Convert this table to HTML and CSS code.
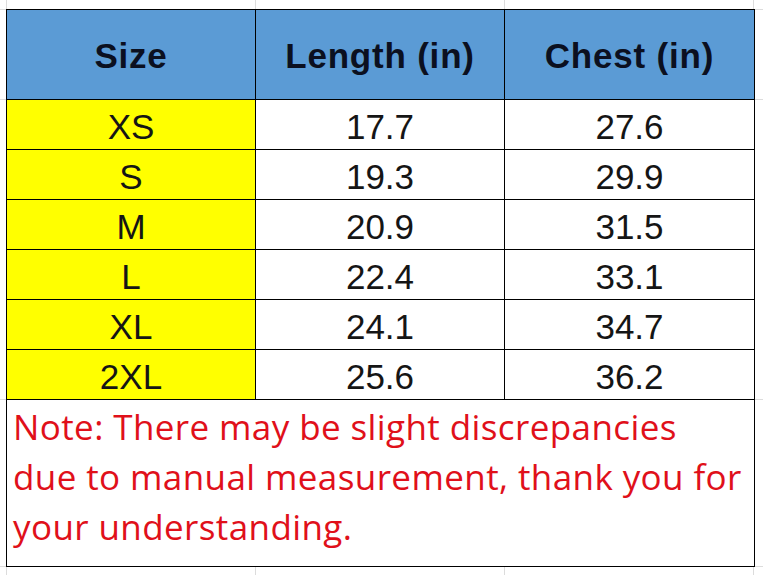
FILE: index.html
```html
<!DOCTYPE html>
<html>
<head>
<meta charset="utf-8">
<link rel="stylesheet" href="styles.css">
</head>
<body>
<div class="sheet">
  <table class="sizes">
    <colgroup>
      <col class="c1"><col class="c2"><col class="c3">
    </colgroup>
    <thead>
      <tr class="head"><th>Size</th><th>Length (in)</th><th>Chest (in)</th></tr>
    </thead>
    <tbody>
      <tr><td class="sz">XS</td><td>17.7</td><td>27.6</td></tr>
      <tr><td class="sz">S</td><td>19.3</td><td>29.9</td></tr>
      <tr><td class="sz">M</td><td>20.9</td><td>31.5</td></tr>
      <tr><td class="sz">L</td><td>22.4</td><td>33.1</td></tr>
      <tr><td class="sz">XL</td><td>24.1</td><td>34.7</td></tr>
      <tr><td class="sz">2XL</td><td>25.6</td><td>36.2</td></tr>
      <tr class="note-row"><td colspan="3" class="note">Note: There may be slight discrepancies due to manual measurement, thank you for your understanding.</td></tr>
    </tbody>
  </table>
</div>
</body>
</html>
```

FILE: styles.css
```css
html, body {
  margin: 0;
  padding: 0;
  background: #fff;
}
body {
  width: 763px;
  height: 575px;
  overflow: hidden;
  font-family: "Liberation Sans", Arial, sans-serif;
  background-color: #fff;
  background-image:
    linear-gradient(to right, transparent 6px, #dcdcdc 6px, #dcdcdc 7px, transparent 7px),
    linear-gradient(to right, transparent 255px, #dcdcdc 255px, #dcdcdc 256px, transparent 256px),
    linear-gradient(to right, transparent 504px, #dcdcdc 504px, #dcdcdc 505px, transparent 505px),
    linear-gradient(to right, transparent 753px, #dcdcdc 753px, #dcdcdc 754px, transparent 754px),
    linear-gradient(to bottom, transparent 9px, #dcdcdc 9px, #dcdcdc 10px, transparent 10px),
    linear-gradient(to bottom, transparent 99px, #dcdcdc 99px, #dcdcdc 100px, transparent 100px),
    linear-gradient(to bottom, transparent 399px, #dcdcdc 399px, #dcdcdc 400px, transparent 400px),
    linear-gradient(to bottom, transparent 566px, #dcdcdc 566px, #dcdcdc 567px, transparent 567px);
}
.sheet {
  padding: 9px 0 0 6px;
}
.sizes {
  border-collapse: collapse;
  table-layout: fixed;
  width: 748px;
  background: #fff;
}
.c1 { width: 249px; }
.c2 { width: 249px; }
.c3 { width: 250px; }
.sizes th,
.sizes td {
  border: 1px solid #000;
  padding: 0;
  text-align: center;
}
.head th {
  height: 86px;
  background: #5b9bd5;
  color: #0b1020;
  font-size: 35px;
  font-weight: bold;
  letter-spacing: 0.8px;
  vertical-align: middle;
  padding-top: 3px;
}
.sizes td {
  height: 49px;
  font-size: 35px;
  color: #151515;
  vertical-align: bottom;
  line-height: 44px;
}
.sizes td.sz {
  background: #ffff00;
}
.note-row td.note {
  height: 164px;
  text-align: left;
  vertical-align: top;
  color: #e0101a;
  font-family: "Open Sans", "Liberation Sans", sans-serif;
  font-size: 35px;
  letter-spacing: 0.4px;
  line-height: 50px;
  padding: 2px 10px 0 6px;
}
```
